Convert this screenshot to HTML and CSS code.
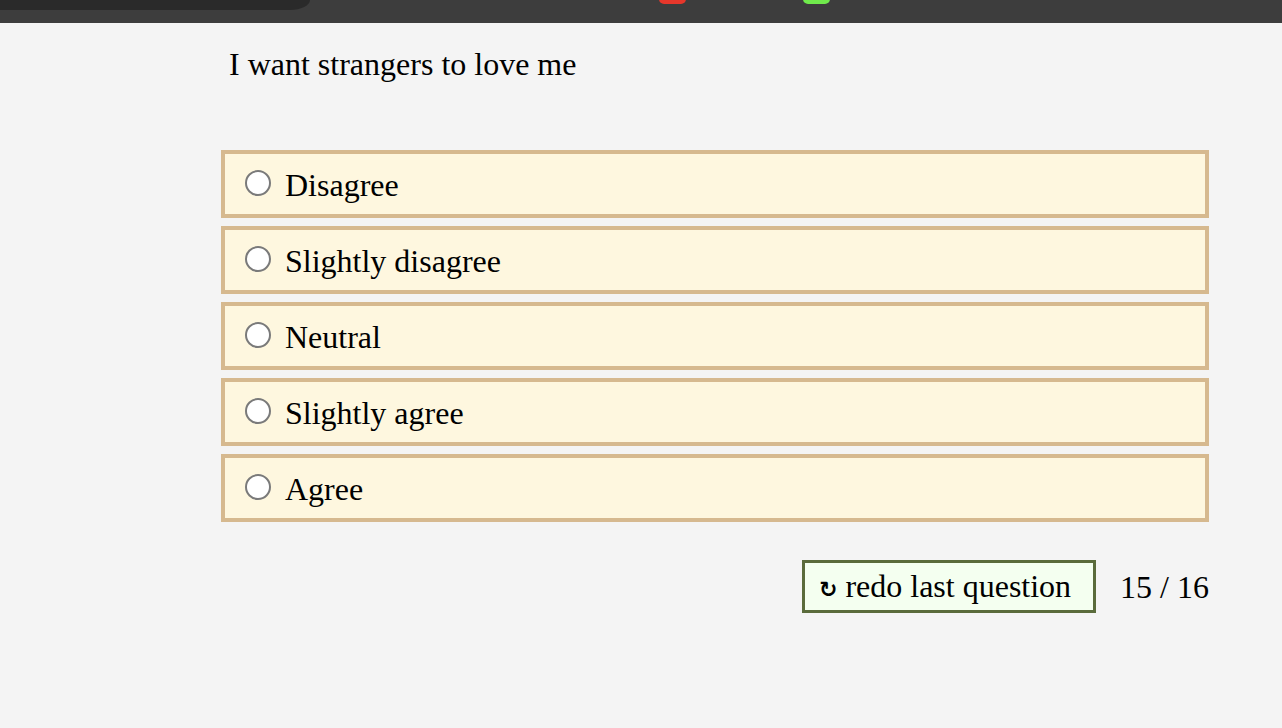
FILE: index.html
```html
<!DOCTYPE html>
<html>
<head>
<meta charset="utf-8">
<link rel="stylesheet" href="styles.css">
</head>
<body>
<div class="chrome">
  <div class="tab"></div>
  <div class="dot dot-red"></div>
  <div class="dot dot-green"></div>
</div>
<main class="quiz">
  <p class="question">I want strangers to love me</p>
  <div class="options">
    <label class="option"><span class="radio"></span><span class="label">Disagree</span></label>
    <label class="option"><span class="radio"></span><span class="label">Slightly disagree</span></label>
    <label class="option"><span class="radio"></span><span class="label">Neutral</span></label>
    <label class="option"><span class="radio"></span><span class="label">Slightly agree</span></label>
    <label class="option"><span class="radio"></span><span class="label">Agree</span></label>
  </div>
  <div class="footer">
    <button class="redo"><span class="redo-icon">↻</span> redo last question</button>
    <span class="progress">15 / 16</span>
  </div>
</main>
</body>
</html>
```

FILE: styles.css
```css
* { box-sizing: border-box; }
html, body { margin: 0; padding: 0; }
body {
  background: #f4f4f4;
  font-family: "Liberation Serif", "Times New Roman", serif;
  font-size: 32px;
  color: #000;
  height: 728px;
  overflow: hidden;
}
.chrome {
  height: 23px;
  background: #3d3d3d;
  position: relative;
}
.tab {
  position: absolute;
  left: 0;
  top: 0;
  width: 310px;
  height: 10px;
  background: #2a2a2a;
  border-bottom-right-radius: 20px 10px;
}
.dot {
  position: absolute;
  top: -6px;
  height: 10px;
  border-radius: 6px;
}
.dot-red { left: 659px; width: 27px; background: #e6372b; }
.dot-green { left: 803px; width: 27px; background: #70ea4c; }
.quiz {
  margin-left: 221px;
  width: 988px;
  padding-top: 23px;
}
.question {
  margin: 0 0 0 8px;
  line-height: 36px;
}
.options {
  margin-top: 68px;
  display: flex;
  flex-direction: column;
  gap: 8px;
}
.option {
  display: flex;
  align-items: center;
  height: 68px;
  border: 4px solid #d6b98f;
  background: #fef7df;
  padding-left: 20px;
}
.radio {
  width: 26px;
  height: 26px;
  border-radius: 50%;
  border: 2px solid #7a7a7a;
  background: #fff;
  flex: none;
  margin-top: -2px;
}
.label {
  margin-left: 14px;
  line-height: 36px;
  padding-top: 1px;
}
.footer {
  margin-top: 38px;
  display: flex;
  justify-content: flex-end;
  align-items: center;
  gap: 24px;
}
.redo {
  height: 53px;
  border: 3px solid #5a6b3b;
  background: #f4fff0;
  font-family: inherit;
  font-size: 32px;
  color: #000;
  padding: 2px 22px 0 14px;
  margin: 0;
  line-height: 36px;
}
.redo-icon {
  font-family: "DejaVu Sans", sans-serif;
  font-size: 22px;
  font-weight: bold;
}
.progress {
  line-height: 36px;
  padding-top: 1px;
}
```
